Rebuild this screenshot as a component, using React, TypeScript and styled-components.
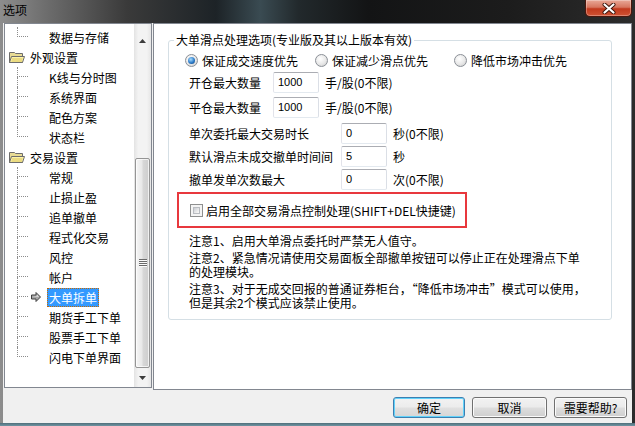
import React from "react";
import styled, { createGlobalStyle, css } from "styled-components";

const GlobalStyle = createGlobalStyle`
  html, body { margin: 0; padding: 0; background: #161616; }
  body {
    font-family: "Noto Sans CJK SC", "Liberation Sans", sans-serif;
    font-size: 12px;
    color: #000;
  }
  * { box-sizing: border-box; }
`;

type TreeItem = {
  kind: "folder" | "child";
  label: string;
  last?: boolean;
  selected?: boolean;
};

const treeItems: TreeItem[] = [
  { kind: "child", label: "数据与存储", last: true },
  { kind: "folder", label: "外观设置" },
  { kind: "child", label: "K线与分时图" },
  { kind: "child", label: "系统界面" },
  { kind: "child", label: "配色方案" },
  { kind: "child", label: "状态栏", last: true },
  { kind: "folder", label: "交易设置" },
  { kind: "child", label: "常规" },
  { kind: "child", label: "止损止盈" },
  { kind: "child", label: "追单撤单" },
  { kind: "child", label: "程式化交易" },
  { kind: "child", label: "风控" },
  { kind: "child", label: "帐户" },
  { kind: "child", label: "大单拆单", selected: true },
  { kind: "child", label: "期货手工下单" },
  { kind: "child", label: "股票手工下单" },
  { kind: "child", label: "闪电下单界面", last: true },
];

export default function App() {
  return (
    <>
      <GlobalStyle />
      <Window>
        <TitleBar>
          <Title>选项</Title>
          <CloseButton>
            <svg width="14" height="11" viewBox="0 0 14 11">
              <path d="M2.5 1.5 L11.5 9.5 M11.5 1.5 L2.5 9.5" stroke="#3a1208" strokeWidth="4" strokeLinecap="round" />
              <path d="M2.5 1.5 L11.5 9.5 M11.5 1.5 L2.5 9.5" stroke="#ffffff" strokeWidth="2.2" strokeLinecap="round" />
            </svg>
          </CloseButton>
        </TitleBar>

        <Client>
          <Main>
            <Tree>
              <TreeList>
                {treeItems.map((item) =>
                  item.kind === "folder" ? (
                    <TreeRow key={item.label}>
                      <FolderIcon />
                      <Label>{item.label}</Label>
                    </TreeRow>
                  ) : (
                    <TreeRow key={item.label}>
                      <Connector>
                        <ConnTop />
                        <ConnBottom $last={item.last} />
                      </Connector>
                      <Marker>{item.selected && <ArrowIcon />}</Marker>
                      <Label $selected={item.selected}>{item.label}</Label>
                    </TreeRow>
                  )
                )}
              </TreeList>
              <Scrollbar>
                <ScrollArrow $height={26}>
                  <svg width="7" height="4" viewBox="0 0 7 4">
                    <polygon points="3.5,0 7,4 0,4" fill="#3c3c3c" />
                  </svg>
                </ScrollArrow>
                <Track $offset={108}>
                  <Thumb $height={210}>
                    <svg width="8" height="8" viewBox="0 0 8 8">
                      <rect x="0" y="0" width="8" height="1" fill="#6a6a6a" />
                      <rect x="0" y="2" width="8" height="1" fill="#6a6a6a" />
                      <rect x="0" y="4" width="8" height="1" fill="#6a6a6a" />
                      <rect x="0" y="6" width="8" height="1" fill="#6a6a6a" />
                      <rect x="0" y="1" width="8" height="1" fill="#fafafa" />
                      <rect x="0" y="3" width="8" height="1" fill="#fafafa" />
                      <rect x="0" y="5" width="8" height="1" fill="#fafafa" />
                      <rect x="0" y="7" width="8" height="1" fill="#fafafa" />
                    </svg>
                  </Thumb>
                </Track>
                <ScrollArrow $height={17}>
                  <svg width="7" height="4" viewBox="0 0 7 4">
                    <polygon points="0,0 7,0 3.5,4" fill="#3c3c3c" />
                  </svg>
                </ScrollArrow>
              </Scrollbar>
            </Tree>

            <Panel>
              <GroupBox>
                <Legend>大单滑点处理选项(专业版及其以上版本有效)</Legend>

                <RadioRow>
                  <RadioItem $width={130}>
                    <Radio>
                      <RadioDot />
                    </Radio>
                    保证成交速度优先
                  </RadioItem>
                  <RadioItem $width={139}>
                    <Radio />
                    保证减少滑点优先
                  </RadioItem>
                  <RadioItem>
                    <Radio />
                    降低市场冲击优先
                  </RadioItem>
                </RadioRow>

                <FieldGroup $top={2} $gap={4}>
                  <FieldRow>
                    <FieldLabel $width={84}>开仓最大数量</FieldLabel>
                    <TextBox defaultValue="1000" />
                    <Unit>手/股(0不限)</Unit>
                  </FieldRow>
                  <FieldRow>
                    <FieldLabel $width={84}>平仓最大数量</FieldLabel>
                    <TextBox defaultValue="1000" />
                    <Unit>手/股(0不限)</Unit>
                  </FieldRow>
                </FieldGroup>

                <FieldGroup $top={5} $gap={2}>
                  <FieldRow>
                    <FieldLabel $width={152}>单次委托最大交易时长</FieldLabel>
                    <TextBox defaultValue="0" />
                    <Unit>秒(0不限)</Unit>
                  </FieldRow>
                  <FieldRow>
                    <FieldLabel $width={152}>默认滑点未成交撤单时间间</FieldLabel>
                    <TextBox defaultValue="5" />
                    <Unit>秒</Unit>
                  </FieldRow>
                  <FieldRow>
                    <FieldLabel $width={152}>撤单发单次数最大</FieldLabel>
                    <TextBox defaultValue="0" />
                    <Unit>次(0不限)</Unit>
                  </FieldRow>
                </FieldGroup>

                <HighlightBox>
                  <CheckBox>
                    <CheckInner />
                  </CheckBox>
                  启用全部交易滑点控制处理(SHIFT+DEL快捷键)
                </HighlightBox>

                <Notes>
                  <Note>注意1、启用大单滑点委托时严禁无人值守。</Note>
                  <Note>
                    注意2、紧急情况请使用交易面板全部撤单按钮可以停止正在处理滑点下单
                    <br />
                    的处理模块。
                  </Note>
                  <Note>
                    注意3、对于无成交回报的普通证券柜台，“降低市场冲击”模式可以使用，
                    <br />
                    但是其余2个模式应该禁止使用。
                  </Note>
                </Notes>
              </GroupBox>
            </Panel>
          </Main>

          <Footer>
            <Button $width={72} $default>确定</Button>
            <Button $width={75}>取消</Button>
            <Button $width={73}>需要帮助?</Button>
          </Footer>
        </Client>
      </Window>
    </>
  );
}

function FolderIcon() {
  return (
    <FolderSlot>
      <svg width="16" height="13" viewBox="0 0 16 13">
        <path d="M0.5 1.5 H5.5 L6.5 2.5 H13.5 V11.5 H0.5 Z" fill="#e9dc95" stroke="#6d6d6d" />
        <path d="M0.5 11.5 L2.5 5.5 H15.5 L13.5 11.5 Z" fill="#fdf3a8" stroke="#6d6d6d" />
        <path d="M3 8 H13.5 M2.5 10 H13" stroke="#d8c35a" strokeWidth="1" />
      </svg>
    </FolderSlot>
  );
}

function ArrowIcon() {
  return (
    <svg width="10" height="10" viewBox="0 0 10 10">
      <polygon points="0.5,3 5,3 5,0.5 9.5,5 5,9.5 5,7 0.5,7" fill="#a8a8a8" stroke="#404040" strokeWidth="1" />
      <polygon points="1.5,4 6,4 6,2.5 8,5" fill="#e6e6e6" />
    </svg>
  );
}

const Window = styled.div`
  width: 635px;
  height: 426px;
  display: flex;
  flex-direction: column;
  overflow: hidden;
  background:
    linear-gradient(to top, #6f95a3 0, #4f6e7a 3px, transparent 3px),
    linear-gradient(90deg, #8d8d8d 0%, #6a6a6a 8%, #3a3a3a 20%, #1d2327 34%, #3a4b52 41%, #22292c 47%, #131415 58%, #1c1c1c 80%, #2c2c2c 100%);
`;

const TitleBar = styled.div`
  height: 23px;
  flex: none;
  display: flex;
  align-items: flex-start;
  padding-left: 3px;
`;

const Title = styled.div`
  line-height: 20px;
  font-size: 12px;
  color: #000;
`;

const CloseButton = styled.div`
  margin-left: auto;
  margin-right: 3px;
  width: 47px;
  height: 17px;
  border: 1px solid #4a170d;
  border-top: none;
  border-radius: 0 0 5px 5px;
  background: linear-gradient(#e9a897 0%, #d7765f 45%, #c2391d 55%, #cf5334 100%);
  box-shadow: inset 0 0 0 1px rgba(255, 255, 255, 0.3);
  display: flex;
  align-items: center;
  justify-content: center;
`;

const Client = styled.div`
  flex: 1;
  margin: 0 3px 3px;
  padding-left: 1px;
  background: #f0f0f0;
  display: flex;
  flex-direction: column;
`;

const Main = styled.div`
  display: flex;
  align-items: flex-start;
  gap: 1px;
`;

const Tree = styled.div`
  width: 148px;
  height: 365px;
  border: 1px solid #828790;
  background: #fff;
  display: flex;
`;

const TreeList = styled.div`
  flex: 1;
  padding-top: 3px;
  overflow: hidden;
`;

const TreeRow = styled.div`
  height: 20px;
  display: flex;
  align-items: stretch;
  white-space: nowrap;
`;

const Connector = styled.div`
  margin-left: 12px;
  width: 11px;
  display: flex;
  flex-direction: column;
`;

const ConnTop = styled.div`
  height: 10px;
  border-left: 1px dotted #8c8c8c;
  border-bottom: 1px dotted #8c8c8c;
`;

const ConnBottom = styled.div<{ $last?: boolean }>`
  flex: 1;
  border-left: 1px dotted ${(p) => (p.$last ? "transparent" : "#8c8c8c")};
`;

const Marker = styled.div`
  width: 19px;
  padding-left: 3px;
  display: flex;
  align-items: center;
`;

const FolderSlot = styled.div`
  margin-left: 4px;
  margin-right: 3px;
  display: flex;
  align-items: center;
`;

const Label = styled.div<{ $selected?: boolean }>`
  align-self: center;
  height: 19px;
  line-height: 19px;
  padding: 0 2px;
  ${(p) =>
    p.$selected &&
    css`
      background: #3399ff;
      color: #fff;
      outline: 1px dotted #c86a00;
      outline-offset: -1px;
    `}
`;

const Scrollbar = styled.div`
  width: 17px;
  display: flex;
  flex-direction: column;
  background: linear-gradient(90deg, #e3e3e3 0%, #f3f3f3 25%, #f3f3f3 75%, #e6e6e6 100%);
`;

const ScrollArrow = styled.div<{ $height: number }>`
  height: ${(p) => p.$height}px;
  flex: none;
  display: flex;
  align-items: flex-end;
  justify-content: center;
  padding-bottom: 7px;
`;

const Track = styled.div<{ $offset: number }>`
  flex: 1;
  padding-top: ${(p) => p.$offset}px;
  display: flex;
  flex-direction: column;
`;

const Thumb = styled.div<{ $height: number }>`
  height: ${(p) => p.$height}px;
  margin: 0 1px;
  border: 1px solid #959595;
  border-radius: 2px;
  background: linear-gradient(90deg, #f6f6f6 0%, #e8e8e8 45%, #d7d7d7 55%, #cdcdcd 100%);
  box-shadow: inset 0 0 0 1px rgba(255, 255, 255, 0.7);
  display: flex;
  align-items: center;
  justify-content: center;
`;

const Panel = styled.div`
  width: 479px;
  height: 367px;
  border: 1px solid #828790;
  background: #fff;
  padding: 9px 0 0 14px;
`;

const GroupBox = styled.fieldset`
  width: 444px;
  margin: 0;
  padding: 0 0 9px;
  min-inline-size: 0;
  border: 1px solid #d5dfe5;
  border-radius: 3px;
`;

const Legend = styled.legend`
  margin-left: 5px;
  padding: 0 2px;
  line-height: 14px;
`;

const RadioRow = styled.div`
  height: 20px;
  margin-top: 3px;
  padding-left: 16px;
  display: flex;
  align-items: center;
  white-space: nowrap;
`;

const RadioItem = styled.label<{ $width?: number }>`
  display: flex;
  align-items: center;
  gap: 4px;
  ${(p) => p.$width && `width: ${p.$width}px;`}
`;

const Radio = styled.span`
  width: 13px;
  height: 13px;
  flex: none;
  border-radius: 50%;
  border: 1px solid #8b9097;
  background: radial-gradient(circle at 40% 35%, #ffffff 0%, #e8e8e8 55%, #c7c7c7 100%);
  display: flex;
  align-items: center;
  justify-content: center;
`;

const RadioDot = styled.span`
  width: 7px;
  height: 7px;
  border-radius: 50%;
  background: radial-gradient(circle at 40% 35%, #a6dcff 0%, #2d7bc8 55%, #0d3b72 100%);
`;

const FieldGroup = styled.div<{ $top: number; $gap: number }>`
  margin-top: ${(p) => p.$top}px;
  padding-left: 20px;
  display: flex;
  flex-direction: column;
  gap: ${(p) => p.$gap}px;
`;

const FieldRow = styled.div`
  height: 21px;
  display: flex;
  align-items: center;
  white-space: nowrap;
`;

const FieldLabel = styled.span<{ $width: number }>`
  width: ${(p) => p.$width}px;
  flex: none;
`;

const TextBox = styled.input`
  width: 46px;
  height: 21px;
  padding: 0 0 1px 4px;
  border: 1px solid;
  border-color: #abadb3 #dbdfe6 #e3e9ef #e2e3ea;
  border-radius: 2px;
  font-family: "Liberation Sans", sans-serif;
  font-size: 11px;
  color: #000;
  background: #fff;
  outline: none;
`;

const Unit = styled.span`
  margin-left: 6px;
`;

const HighlightBox = styled.div`
  width: 290px;
  height: 36px;
  margin: 2px 0 0 8px;
  padding-left: 11px;
  border: 2px solid #e8383d;
  display: flex;
  align-items: center;
  gap: 3px;
  white-space: nowrap;
`;

const CheckBox = styled.span`
  width: 13px;
  height: 13px;
  flex: none;
  border: 1px solid #8e8f8f;
  background: #f4f4f4;
  padding: 2px;
  display: flex;
`;

const CheckInner = styled.span`
  flex: 1;
  border: 1px solid #b9bcc1;
  background: linear-gradient(135deg, #c9ccd2 0%, #eeeeee 70%, #fafafa 100%);
`;

const Notes = styled.div`
  margin-top: 6px;
  padding-left: 20px;
  display: flex;
  flex-direction: column;
  gap: 3px;
`;

const Note = styled.div`
  line-height: 14px;
  white-space: nowrap;
`;

const Footer = styled.div`
  padding: 7px 5px 0 0;
  display: flex;
  justify-content: flex-end;
  gap: 7px;
`;

const Button = styled.button<{ $width: number; $default?: boolean }>`
  width: ${(p) => p.$width}px;
  height: 21px;
  padding: 0;
  font-family: inherit;
  font-size: 12px;
  color: #000;
  border: 1px solid #707070;
  border-radius: 3px;
  background: linear-gradient(#f2f2f2 0%, #ebebeb 48%, #dddddd 52%, #cfcfcf 100%);
  box-shadow: inset 0 0 0 1px #fbfbfb;
  ${(p) =>
    p.$default &&
    css`
      border-color: #3c7fb1;
      box-shadow: inset 0 0 0 1px #62d2fa;
      background: linear-gradient(#f2f2f2 0%, #ececec 48%, #e0e0e0 52%, #d6d6d6 100%);
    `}
`;
